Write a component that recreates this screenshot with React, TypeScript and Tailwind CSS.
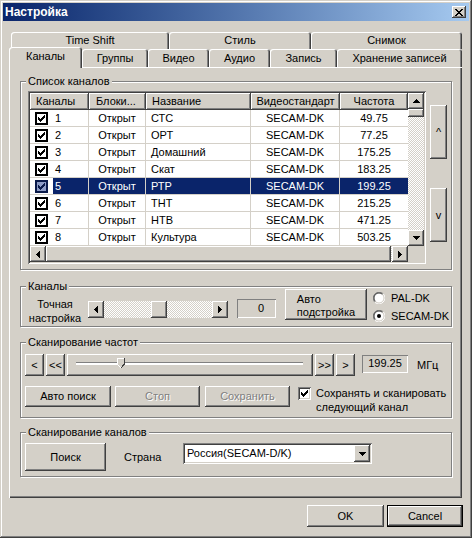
import React from 'react';

const RAISED =
  'bg-[#d4d0c8] shadow-[inset_-1px_-1px_#404040,inset_1px_1px_#ffffff,inset_-2px_-2px_#808080,inset_2px_2px_#d4d0c8]';
const DEFBTN =
  'bg-[#d4d0c8] shadow-[inset_0_0_0_1px_#000000,inset_-2px_-2px_#404040,inset_2px_2px_#ffffff,inset_-3px_-3px_#808080,inset_3px_3px_#d4d0c8]';
const SUNKEN =
  'shadow-[inset_1px_1px_#808080,inset_-1px_-1px_#ffffff,inset_2px_2px_#404040,inset_-2px_-2px_#d4d0c8]';
const STATIC = 'shadow-[inset_1px_1px_#808080,inset_-1px_-1px_#ffffff]';
const HDR =
  'bg-[#d4d0c8] shadow-[inset_-1px_-1px_#404040,inset_1px_1px_#ffffff,inset_-2px_-2px_#808080] flex items-center h-full';
const CHECKER =
  'bg-[image:repeating-conic-gradient(#ffffff_0%_25%,#d4d0c8_0%_50%)] bg-[length:2px_2px]';
const ETCHED = 'border border-[#808080] shadow-[inset_1px_1px_#ffffff,1px_1px_#ffffff]';
const DISABLED = 'text-[#808080] [text-shadow:1px_1px_0_#ffffff]';
const TAB =
  'bg-[#d4d0c8] rounded-t-[3px] shadow-[inset_1px_1px_#ffffff,inset_-1px_0_#404040,inset_-2px_0_#808080] flex items-center justify-center';

const channels = [
  { n: 1, name: 'СТС', f: '49.75' },
  { n: 2, name: 'ОРТ', f: '77.25' },
  { n: 3, name: 'Домашний', f: '175.25' },
  { n: 4, name: 'Скат', f: '183.25' },
  { n: 5, name: 'РТР', f: '199.25' },
  { n: 6, name: 'ТНТ', f: '215.25' },
  { n: 7, name: 'НТВ', f: '471.25' },
  { n: 8, name: 'Культура', f: '503.25' },
];

function Tri({ dir }: { dir: 'up' | 'down' | 'left' | 'right' }) {
  const paths = {
    up: 'M3 0h1v1H3z M2 1h3v1H2z M1 2h5v1H1z M0 3h7v1H0z',
    down: 'M0 0h7v1H0z M1 1h5v1H1z M2 2h3v1H2z M3 3h1v1H3z',
    left: 'M3 0h1v7H3z M2 1h1v5H2z M1 2h1v3H1z M0 3h1v1H0z',
    right: 'M0 0h1v7H0z M1 1h1v5H1z M2 2h1v3H2z M3 3h1v1H3z',
  };
  const v = dir === 'up' || dir === 'down';
  return (
    <svg width={v ? 7 : 4} height={v ? 4 : 7} viewBox={v ? '0 0 7 4' : '0 0 4 7'} shapeRendering="crispEdges">
      <path d={paths[dir]} fill="#000" />
    </svg>
  );
}

function ScrollBtn({ dir, className = '' }: { dir: 'up' | 'down' | 'left' | 'right'; className?: string }) {
  return (
    <div className={`${RAISED} w-[16px] h-[16px] flex items-center justify-center shrink-0 ${className}`}>
      <Tri dir={dir} />
    </div>
  );
}

function CheckMark({ color = '#000' }: { color?: string }) {
  return (
    <svg width="7" height="7" viewBox="0 0 7 7" shapeRendering="crispEdges">
      <path
        d="M0 2h1v3H0z M1 3h1v3H1z M2 4h1v3H2z M3 3h1v3H3z M4 2h1v3H4z M5 1h1v3H5z M6 0h1v3H6z"
        fill={color}
      />
    </svg>
  );
}

function ListCheck({ sel }: { sel: boolean }) {
  return (
    <div
      className={`w-[13px] h-[13px] border-2 flex items-center justify-center shrink-0 ${
        sel ? 'border-[#0a1a4a] bg-[#8e9cc6]' : 'border-black bg-white'
      }`}
    >
      <CheckMark color={sel ? '#0a1a4a' : '#000'} />
    </div>
  );
}

function Btn({
  children,
  className = '',
  disabled = false,
}: {
  children: React.ReactNode;
  className?: string;
  disabled?: boolean;
}) {
  return (
    <div className={`${RAISED} flex items-center justify-center shrink-0 ${disabled ? DISABLED : ''} ${className}`}>
      {children}
    </div>
  );
}

function Radio({ on }: { on: boolean }) {
  return (
    <svg width="12" height="12" viewBox="0 0 12 12">
      <circle cx="6" cy="6" r="5" fill="#fff" />
      <path d="M1.76 10.24 A6 6 0 0 1 10.24 1.76" stroke="#808080" strokeWidth="1" fill="none" />
      <path d="M10.24 1.76 A6 6 0 0 1 1.76 10.24" stroke="#ffffff" strokeWidth="1" fill="none" />
      <path d="M2.46 9.54 A5 5 0 0 1 9.54 2.46" stroke="#404040" strokeWidth="1" fill="none" />
      <path d="M9.54 2.46 A5 5 0 0 1 2.46 9.54" stroke="#d4d0c8" strokeWidth="1" fill="none" />
      {on && <circle cx="6" cy="6" r="2" fill="#000" />}
    </svg>
  );
}

function Group({
  title,
  className = '',
  children,
}: {
  title: string;
  className?: string;
  children: React.ReactNode;
}) {
  return (
    <div className={`${ETCHED} w-[432px] ${className}`}>
      <div className="-mt-[7px] -mb-[6px] ml-[5px] w-fit px-[2px] h-[13px] leading-[13px] bg-[#d4d0c8]">{title}</div>
      {children}
    </div>
  );
}

function ChannelList() {
  return (
    <div className={`w-[398px] h-[173px] p-[2px] bg-white ${SUNKEN}`}>
      <div className="flex h-[153px]">
        <div className="w-[378px]">
          <div className="flex h-[17px]">
            <div className={`${HDR} w-[59px] pl-[6px]`}>Каналы</div>
            <div className={`${HDR} w-[57px] pl-[7px]`}>Блоки...</div>
            <div className={`${HDR} w-[105px] pl-[6px]`}>Название</div>
            <div className={`${HDR} w-[89px] justify-center`}>Видеостандарт</div>
            <div className={`${HDR} w-[68px] justify-center`}>Частота</div>
          </div>
          {channels.map((c) => {
            const sel = c.n === 5;
            const hl = sel ? 'bg-[#0a246a] text-white' : '';
            return (
              <div key={c.n} className="flex h-[17px]">
                <div className="w-[59px] h-full flex items-center pl-[5px] border-r border-b border-[#d4d0c8]">
                  <ListCheck sel={sel} />
                  <div className={`ml-[5px] pl-[2px] flex-1 h-full flex items-center ${hl}`}>{c.n}</div>
                </div>
                <div className={`w-[57px] h-full flex items-center justify-center border-r border-b border-[#d4d0c8] ${hl}`}>
                  Открыт
                </div>
                <div className={`w-[105px] h-full flex items-center pl-[5px] border-r border-b border-[#d4d0c8] ${hl}`}>
                  {c.name}
                </div>
                <div className={`w-[89px] h-full flex items-center justify-center border-r border-b border-[#d4d0c8] ${hl}`}>
                  SECAM-DK
                </div>
                <div className={`w-[68px] h-full flex items-center justify-center border-b border-[#d4d0c8] ${hl}`}>
                  {c.f}
                </div>
              </div>
            );
          })}
        </div>
        <div className="w-[16px] h-full flex flex-col">
          <ScrollBtn dir="up" />
          <div className={`${RAISED} h-[8px] w-[16px]`} />
          <div className={`flex-1 ${CHECKER}`} />
          <ScrollBtn dir="down" />
        </div>
      </div>
      <div className="flex h-[16px]">
        <ScrollBtn dir="left" />
        <div className={`${RAISED} w-[345px] h-[16px]`} />
        <div className={`w-[1px] h-[16px] ${CHECKER}`} />
        <ScrollBtn dir="right" />
        <div className="w-[16px] h-[16px] bg-[#d4d0c8]" />
      </div>
    </div>
  );
}

function Thumb() {
  return (
    <svg width="8" height="11" viewBox="0 0 8 11" shapeRendering="crispEdges">
      <path d="M0 0H8V7L4 11L0 7Z" fill="#d4d0c8" />
      <path d="M0 0h7v1H0z M0 0h1v7H0z M1 7h1v1H1z M2 8h1v1H2z M3 9h1v1H3z" fill="#fff" />
      <path d="M7 0h1v7H7z M6 7h1v1H6z M5 8h1v1H5z M4 9h1v1H4z M6 6h1v1H6z M5 7h1v1H5z" fill="#404040" />
    </svg>
  );
}

export default function App() {
  return (
    <div
      className={`w-[472px] h-[538px] bg-[#d4d0c8] p-[3px] font-['Liberation_Sans',Arial,sans-serif] text-[11px] leading-[13px] text-black select-none shadow-[inset_-1px_-1px_#404040,inset_1px_1px_#d4d0c8,inset_-2px_-2px_#808080,inset_2px_2px_#ffffff]`}
    >
      {/* title bar */}
      <div className="flex items-center h-[18px] pl-[2px] bg-linear-to-r from-[#0a246a] to-[#a6caf0]">
        <span className="text-white font-bold text-[12px]">Настройка</span>
        <div className={`${RAISED} ml-auto mr-[3px] w-[14px] h-[12px] flex items-center justify-center`}>
          <svg width="8" height="7" viewBox="0 0 8 7" shapeRendering="crispEdges">
            <path
              d="M0 0h2v1H0z M6 0h2v1H6z M1 1h2v1H1z M5 1h2v1H5z M2 2h4v1H2z M3 3h2v1H3z M2 4h4v1H2z M1 5h2v1H1z M5 5h2v1H5z M0 6h2v1H0z M6 6h2v1H6z"
              fill="#000"
            />
          </svg>
        </div>
      </div>

      {/* tabs */}
      <div className="flex ml-[8px] mt-[11px] h-[17px]">
        <div className={`${TAB} w-[158px] h-full`}>Time Shift</div>
        <div className={`${TAB} w-[142px] h-full`}>Стиль</div>
        <div className={`${TAB} w-[151px] h-full`}>Снимок</div>
      </div>
      <div className="flex items-end ml-[6px] h-[18px]">
        <div className={`${TAB} relative z-10 w-[73px] h-[21px] -mb-px pb-[2px]`}>Каналы</div>
        <div className={`${TAB} w-[66px] h-full`}>Группы</div>
        <div className={`${TAB} w-[61px] h-full`}>Видео</div>
        <div className={`${TAB} w-[61px] h-full`}>Аудио</div>
        <div className={`${TAB} w-[67px] h-full`}>Запись</div>
        <div className={`${TAB} w-[125px] h-full`}>Хранение записей</div>
      </div>

      {/* tab panel */}
      <div className="ml-[6px] w-[453px] h-[431px] pl-[11px] pt-[14px] bg-[#d4d0c8] shadow-[inset_1px_1px_#ffffff,inset_-1px_-1px_#404040,inset_-2px_-2px_#808080]">
        <Group title="Список каналов" className="h-[189px]">
          <div className="flex mt-[9px] ml-[7px]">
            <ChannelList />
            <div className="flex flex-col ml-[4px]">
              <Btn className="w-[17px] h-[54px] mt-[14px]">^</Btn>
              <Btn className="w-[17px] h-[54px] mt-[29px]">v</Btn>
            </div>
          </div>
        </Group>

        <Group title="Каналы" className="h-[41px] mt-[16px]">
          <div className="flex items-start ml-[6px]">
            <div className="w-[56px] mt-[10px] text-center leading-[14px]">
              Точная
              <br />
              настройка
            </div>
            <div className="flex ml-[5px] mt-[14px] w-[140px] h-[17px]">
              <ScrollBtn dir="left" className="h-[17px]" />
              <div className={`w-[47px] h-full ${CHECKER}`} />
              <div className={`${RAISED} w-[16px] h-full`} />
              <div className={`w-[45px] h-full ${CHECKER}`} />
              <ScrollBtn dir="right" className="h-[17px]" />
            </div>
            <div className={`${STATIC} ml-[9px] mt-[12px] w-[39px] h-[19px] flex items-center justify-end pr-[12px]`}>
              0
            </div>
            <Btn className="ml-[9px] mt-[2px] w-[82px] h-[31px] pt-[2px]">
              <div className="text-left leading-[13px]">
                Авто
                <br />
                подстройка
              </div>
            </Btn>
            <div className="flex flex-col ml-[6px]">
              <div className="flex items-center h-[12px] mt-[5px]">
                <Radio on={false} />
                <span className="ml-[6px]">PAL-DK</span>
              </div>
              <div className="flex items-center h-[12px] mt-[6px]">
                <Radio on={true} />
                <span className="ml-[6px]">SECAM-DK</span>
              </div>
            </div>
          </div>
        </Group>

        <Group title="Сканирование частот" className="h-[76px] mt-[15px]">
          <div className="flex items-center h-[22px] mt-[11px] ml-[4px]">
            <Btn className="w-[19px] h-[22px]">&lt;</Btn>
            <Btn className="ml-[2px] w-[19px] h-[22px]">&lt;&lt;</Btn>
            <div className={`${RAISED} relative ml-[2px] w-[246px] h-[22px] pt-[8px] pl-[9px]`}>
              <div className="w-[227px] h-[3px] bg-white shadow-[inset_0_1px_#808080]" />
              <div className="absolute left-[50px] top-[4px]">
                <Thumb />
              </div>
            </div>
            <Btn className="ml-[2px] w-[19px] h-[22px]">&gt;&gt;</Btn>
            <Btn className="ml-[2px] w-[19px] h-[22px]">&gt;</Btn>
            <div className={`${STATIC} ml-[7px] -mt-[3px] w-[46px] h-[18px] flex items-center justify-center`}>
              199.25
            </div>
            <span className="ml-[9px]">МГц</span>
          </div>
          <div className="flex items-start mt-[10px] ml-[4px]">
            <Btn className="w-[86px] h-[21px]">Авто поиск</Btn>
            <Btn className="ml-[4px] w-[85px] h-[21px]" disabled>
              Стоп
            </Btn>
            <Btn className="ml-[5px] w-[85px] h-[21px]" disabled>
              Сохранить
            </Btn>
            <div className={`ml-[8px] mt-[1px] w-[13px] h-[13px] bg-white ${SUNKEN} flex items-center justify-center`}>
              <CheckMark />
            </div>
            <div className="ml-[5px] leading-[14px]">
              Сохранять и сканировать
              <br />
              следующий канал
            </div>
          </div>
        </Group>

        <Group title="Сканирование каналов" className="h-[45px] mt-[14px]">
          <div className="flex items-center mt-[10px] ml-[4px]">
            <Btn className="w-[81px] h-[28px]">Поиск</Btn>
            <span className="ml-[18px] w-[59px]">Страна</span>
            <div className={`w-[189px] h-[21px] -mt-[7px] bg-white ${SUNKEN} flex items-center pl-[4px] pr-[2px]`}>
              <span className="flex-1">Россия(SECAM-D/K)</span>
              <ScrollBtn dir="down" className="h-[17px]" />
            </div>
          </div>
        </Group>
      </div>

      {/* dialog buttons */}
      <div className="flex ml-[304px] mt-[7px]">
        <Btn className="w-[77px] h-[22px]">OK</Btn>
        <div className={`${DEFBTN} ml-[3px] w-[76px] h-[22px] flex items-center justify-center`}>Cancel</div>
      </div>
    </div>
  );
}
